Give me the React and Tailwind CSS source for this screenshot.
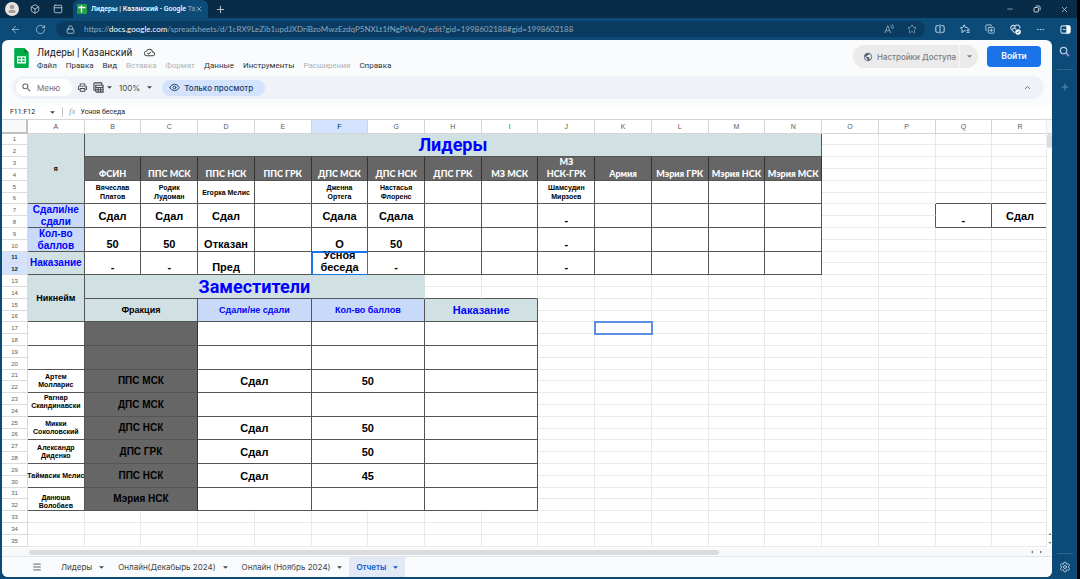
import React from "react";
import {
  ArrowLeft,
  Box,
  ChevronUp,
  CopyPlus,
  Ellipsis,
  Eye,
  Lock,
  Menu,
  Minus,
  PanelTop,
  Plus,
  RotateCw,
  Settings,
  Star,
  X,
} from "lucide-react";
import { MdOutlineCloudDone, MdOutlinePrint, MdPublic, MdSearch } from "react-icons/md";

const COLUMNS = "ABCDEFGHIJKLMNOPQR".split("");
const ROW_COUNT = 35;

const TEAL = "bg-[#d0e0e3]";
const BLUE = "bg-[#c9daf8]";
const GRAY = "bg-[#666666]";

const value = "font-bold text-[11px] leading-[12px] text-black";
const low = `${value} pb-px`;
const name = "font-bold text-[7px] leading-[9px] text-black";
const head = "font-['Lato'] font-black text-[9px] leading-[12px] text-white";
const small = "font-bold text-[9px] leading-[12px]";
const title = "font-['Roboto'] font-bold text-[18px] leading-[22px] text-[#0000ff]";

// key -> cell with optional spans; everything else is an empty cell
const cells = {};

const put = (key, text, opts = {}) => {
  cells[key] = { text, cs: 1, rs: 2, bg: "bg-white", cls: value, align: "items-center", ...opts };
};

put("A1", "я", { rs: 6, bg: TEAL, cls: name });
put("B1", "Лидеры", { cs: 13, bg: TEAL, cls: title });

const factions = [
  "ФСИН", "ППС МСК", "ППС НСК", "ППС ГРК", "ДПС МСК", "ДПС НСК", "ДПС ГРК",
  "МЗ МСК", "МЗ\nНСК-ГРК", "Армия", "Мэрия ГРК", "Мэрия НСК", "Мэрия МСК",
];
const leaders = ["Вячеслав\nПлатов", "Родик\nЛудоман", "Егорка Мелис", "", "Дженна\nОртега", "Настасья\nФлоренс", "", "", "Шамсудин\nМирзоев"];
const passed = ["Сдал", "Сдал", "Сдал", "", "Сдала", "Сдала", "", "", "-"];
const points = ["50", "50", "Отказан", "", "О", "50", "", "", "-"];
const penalty = ["-", "-", "Пред", "", "Усноя\nбеседа", "-", "", "", "-"];

factions.forEach((faction, i) => {
  const col = COLUMNS[i + 1];
  put(`${col}3`, faction, { bg: GRAY, cls: head, align: "items-end" });
  put(`${col}5`, leaders[i] || "", { cls: name });
  put(`${col}7`, passed[i] || "", passed[i] === "-" ? { cls: low, align: "items-end" } : {});
  put(`${col}9`, points[i] || "", { cls: low, align: "items-end" });
  put(`${col}11`, penalty[i] || "", { cls: low, align: "items-end" });
});

const side = "font-bold text-[10px] leading-[12px] text-[#0000ff]";
put("A7", "Сдали/не\nсдали", { bg: BLUE, cls: side });
put("A9", "Кол-во\nбаллов", { bg: BLUE, cls: side });
put("A11", "Наказание", { bg: TEAL, cls: side });
put("Q7", "-", { cls: low, align: "items-end" });
put("R7", "Сдал");

put("A13", "Никнейм", { rs: 4, bg: TEAL, cls: `${small} text-black` });
put("B13", "Заместители", { cs: 6, bg: TEAL, cls: title, noRight: true });
put("B15", "Фракция", { cs: 2, bg: TEAL, cls: `${small} text-black` });
put("D15", "Сдали/не сдали", { cs: 2, bg: BLUE, cls: `${small} text-[#0000ff]` });
put("F15", "Кол-во баллов", { cs: 2, bg: BLUE, cls: `${small} text-[#0000ff]` });
put("H15", "Наказание", { cs: 2, bg: TEAL, cls: "font-bold text-[11px] leading-[12px] text-[#0000ff]" });

const deputies = [
  { nick: "", faction: "", passed: "", points: "" },
  { nick: "", faction: "", passed: "", points: "" },
  { nick: "Артем\nМолларис", faction: "ППС МСК", passed: "Сдал", points: "50" },
  { nick: "Рагнар\nСкандинавски", faction: "ДПС МСК", passed: "", points: "", align: "items-start" },
  { nick: "Микки\nСоколовский", faction: "ДПС НСК", passed: "Сдал", points: "50" },
  { nick: "Александр\nДиденко", faction: "ДПС ГРК", passed: "Сдал", points: "50" },
  { nick: "Таймасик Мелис", faction: "ППС НСК", passed: "Сдал", points: "45" },
  { nick: "Данюша\nВолобаев", faction: "Мэрия НСК", passed: "", points: "", align: "items-end" },
];

deputies.forEach((d, i) => {
  const row = 17 + i * 2;
  put(`A${row}`, d.nick, { cls: "font-bold text-[7px] leading-[8px] text-black", align: d.align || "items-center" });
  put(`B${row}`, d.faction, { cs: 2, bg: GRAY, cls: "font-bold text-[10px] leading-[12px] text-black" });
  put(`D${row}`, d.passed, { cs: 2 });
  put(`F${row}`, d.points, { cs: 2 });
  put(`H${row}`, "", { cs: 2 });
});

const covered = new Set();
Object.entries(cells).forEach(([key, cell]) => {
  const c = COLUMNS.indexOf(key[0]);
  const r = Number(key.slice(1));
  for (let y = r; y < r + cell.rs; y++) {
    for (let x = c; x < c + cell.cs; x++) {
      if (y !== r || x !== c) covered.add(`${COLUMNS[x]}${y}`);
    }
  }
});

// empty cells that carry the border of a neighbouring block
const darkRight = new Set(["P7", "P8"]);
const darkBottom = new Set(["Q6", "R6", "H14", "I14"]);
// the frame of the selected cell F11
const blueRight = new Set(["E11", "F11"]);
const blueBottom = new Set(["F9", "F11"]);

const rightBorder = (id, cell) => {
  if (blueRight.has(id)) return "border-r-[#1a73e8]";
  if (!cell) return darkRight.has(id) ? "border-r-[#555555]" : "border-r-[#e8e9ea]";
  if (cell.noRight) return "border-r-[#d0e0e3]";
  return cell.bg === GRAY ? "border-r-[#333333]" : "border-r-[#555555]";
};

const bottomBorder = (id, cell) => {
  if (blueBottom.has(id)) return "border-b-[#1a73e8]";
  return cell || darkBottom.has(id) ? "border-b-[#555555]" : "border-b-[#e8e9ea]";
};

const outline = (id) => {
  if (id === "F11") return "outline -outline-offset-1 outline-[#1a73e8]";
  if (id === "K17") return "outline-2 -outline-offset-1 outline-[#5b8fe0]";
  return "";
};

const Caret = () => (
  <svg viewBox="0 0 8 4" className="w-[5px] h-[3px] shrink-0" fill="currentColor" aria-hidden="true">
    <path d="M0 0h8L4 4z" />
  </svg>
);

const SheetsLogo = ({ className }) => (
  <svg viewBox="0 0 16 22" className={className} aria-hidden="true">
    <path d="M1.5 0H11l5 5v15.5a1.5 1.5 0 0 1-1.5 1.5h-13A1.5 1.5 0 0 1 0 20.5v-19A1.5 1.5 0 0 1 1.5 0z" fill="#00ac47" />
    <path d="M11 0l5 5h-5z" fill="#00832d" />
    <path d="M3 9h10v8H3zM4.500 10.500v1.800h2.800v-1.800zm4.200 0v1.800h2.800v-1.800zm-4.200 3.200v1.800h2.800v-1.800zm4.200 0v1.800h2.800v-1.800z" fill="#fff" fillRule="evenodd" />
  </svg>
);

const TitleBar = () => (
  <div className="flex h-[18px] items-center bg-[#082b47] text-[#c3d0da]">
    <button aria-label="Профиль" className="ml-[5px] flex size-[14px] items-end justify-center rounded-full bg-[#e6e4e2]">
      <svg viewBox="0 0 14 14" className="size-[14px]" fill="#a39c98">
        <circle cx="7" cy="5" r="2.300" />
        <rect x="3.500" y="8" width="7" height="3" rx="1.500" />
      </svg>
    </button>
    <button aria-label="Рабочие области" className="ml-[11px]"><Box size={10} /></button>
    <button aria-label="Вкладки" className="ml-[13px]"><PanelTop size={10} /></button>
    <div className="ml-2.5 flex h-full w-[135px] items-center rounded-t-md bg-[#0c4a78] pl-1 pr-2">
      <svg viewBox="0 0 10 10" className="size-[10px] shrink-0">
        <rect width="10" height="10" rx="1" fill="#23a047" />
        <path d="M1.500 3.500h7M4.500 1.500v7" stroke="#fff" strokeWidth="1.300" />
      </svg>
      <span className="ml-1 flex-1 whitespace-nowrap text-[7px] font-medium text-white">
        Лидеры | Казанский - Google <span className="text-[#7fa0b8]">Та</span>
      </span>
      <button aria-label="Закрыть вкладку"><X size={8} /></button>
    </div>
    <button aria-label="Новая вкладка" className="ml-[7px]"><Plus size={11} /></button>
    <div className="ml-auto flex items-center gap-[19px] pr-2">
      <button aria-label="Свернуть"><Minus size={8} /></button>
      <button aria-label="Восстановить">
        <svg viewBox="0 0 8 8" className="size-2" fill="none" stroke="currentColor">
          <rect x="1" y="2.500" width="4.500" height="4.500" rx="1" />
          <path d="M2.800 1h3a1.300 1.300 0 0 1 1.300 1.300v3" />
        </svg>
      </button>
      <button aria-label="Закрыть"><X size={9} /></button>
    </div>
  </div>
);

const AddressBar = () => (
  <div className="flex h-[22px] items-center bg-[#0c4a78] pr-1.5 text-[#c3d6e4]">
    <button aria-label="Назад" className="ml-2.5"><ArrowLeft size={11} strokeWidth={1.5} /></button>
    <button aria-label="Обновить" className="ml-[14px]"><RotateCw size={11} strokeWidth={1.5} /></button>
    <div className="ml-[10px] flex h-4 flex-1 items-center rounded-full bg-[#0a3b61] pl-2.5 pr-2">
      <Lock size={9} />
      <span className="ml-[9px] whitespace-nowrap font-['Lato',sans-serif] text-[8px] text-[#8fa7ba]">
        https://<span className="text-white">docs.google.com</span>
        /spreadsheets/d/1cRX9LeZib1updJXDriBzoMwzEzdqP5NXLt1fNgPtVwQ/edit?gid=1998602188#gid=1998602188
      </span>
      <span className="ml-auto flex items-center gap-[13px] text-[#7f9bb0]">
        <button aria-label="Прочесть вслух">
          <svg viewBox="0 0 12 12" className="size-[10px]" fill="none" stroke="currentColor" strokeWidth="1.200">
            <path d="M1 11l3.500-9L8 11M2.200 8h4.600M8 1.500q1.300 1.500 0.500 3.500M10 0.500q2 2.500 0.500 5.500" />
          </svg>
        </button>
        <button aria-label="В избранное"><Star size={10} /></button>
      </span>
    </div>
    <div className="ml-2.5 flex items-center gap-[15px]">
      <button aria-label="Разделить экран">
        <svg viewBox="0 0 12 12" className="size-[10px]" fill="none" stroke="currentColor" strokeWidth="1.200">
          <path d="M4.500 2H2.500A1.500 1.500 0 0 0 1 3.500v5A1.500 1.500 0 0 0 2.500 10h2M7.500 2h2A1.500 1.500 0 0 1 11 3.500v5A1.500 1.500 0 0 1 9.500 10h-2M6 0.500v11" />
        </svg>
      </button>
      <button aria-label="Избранное">
        <svg viewBox="0 0 12 12" className="size-[10px]" fill="none" stroke="currentColor" strokeWidth="1.200" strokeLinejoin="round">
          <path d="M7 8.500L5 7.800 2.500 10.500 2.500 7 0.700 4.500 3.500 4 5 1 6.500 4 9 4.300M8.500 6h3M8 8h3.500M8 10h3.500" />
        </svg>
      </button>
      <button aria-label="Коллекции"><CopyPlus size={10} /></button>
      <button aria-label="Производительность">
        <svg viewBox="0 0 12 12" className="size-[11px]" fill="none" stroke="currentColor" strokeWidth="1.200">
          <path d="M5.500 10L1.500 6a2.600 2.600 0 0 1 4.200-3.500A2.600 2.600 0 0 1 10.500 5M2.500 5h1.500l1-1.500 1.300 2.500" />
          <circle cx="8.800" cy="8.600" r="3" fill="#fff" stroke="none" />
          <path d="M7.400 8.700l1 1 1.800-2" stroke="#0c4a78" strokeWidth="0.900" />
        </svg>
      </button>
      <button aria-label="Ещё"><Ellipsis size={9} /></button>
      <button aria-label="Боковая панель">
        <svg viewBox="0 0 12 12" className="size-[11px]" fill="none" stroke="currentColor" strokeWidth="1.200">
          <path d="M7.500 2H2.500A1.500 1.500 0 0 0 1 3.500v5A1.500 1.500 0 0 0 2.500 10h5M3 6h3" />
          <path d="M7.500 2h2A1.500 1.500 0 0 1 11 3.500v5A1.500 1.500 0 0 1 9.500 10h-2z" fill="#fff" stroke="#fff" />
        </svg>
      </button>
    </div>
  </div>
);

const menus = [
  ["Файл"], ["Правка"], ["Вид"], ["Вставка", true], ["Формат", true],
  ["Данные"], ["Инструменты"], ["Расширения", true], ["Справка"],
];

const DocHeader = () => (
  <header className="flex h-9 items-start pl-3 pr-[11px]">
    <SheetsLogo className="mt-2 h-5 w-[15px]" />
    <div className="ml-2 flex flex-col pt-1.5">
      <div className="flex items-center">
        <h1 className="text-[10px] leading-[13px] text-[#1f1f1f]">Лидеры | Казанский</h1>
        <MdOutlineCloudDone size={11} className="ml-3 text-[#444746]" />
      </div>
      <nav className="flex gap-[9px] text-[8px] leading-[13px]">
        {menus.map(([label, disabled]) => (
          <button key={label} disabled={disabled} className={disabled ? "text-[#b0b3b6]" : "text-[#333333]"}>
            {label}
          </button>
        ))}
      </nav>
    </div>
    <div className="mt-[5px] ml-auto flex h-[23px] items-center rounded-full bg-[#ebebeb] text-[#7b7d7f]">
      <button className="flex h-full items-center gap-1 border-r border-[#f6f6f6] pl-2.5 pr-[3px] font-['Inter',sans-serif] text-[8px] font-medium">
        <MdPublic size={10} className="text-[#5b6b7d]" />
        Настройки Доступа
      </button>
      <button aria-label="Параметры доступа" className="flex h-full w-[18px] items-center justify-center"><Caret /></button>
    </div>
    <a href="#login" className="mt-1.5 ml-[9px] flex h-[21px] w-[54px] items-center justify-center rounded-sm bg-[#1a73e8] text-[9px] font-medium text-white">
      Войти
    </a>
  </header>
);

const Toolbar = () => (
  <div className="mr-2 mb-1.5 ml-2.5 flex h-[23px] items-center rounded-full bg-[#eff3f9] text-[#444746]">
    <label className="ml-1 flex h-[17px] w-14 items-center rounded-full bg-white pl-[5px]">
      <MdSearch size={11} />
      <input aria-label="Меню" placeholder="Меню" className="ml-[5px] w-8 font-['Inter',sans-serif] text-[8px] outline-none placeholder:text-[#6f7275]" />
    </label>
    <button aria-label="Печать" className="ml-[5px]"><MdOutlinePrint size={11} /></button>
    <button aria-label="Фильтры" className="ml-[5px] flex items-center gap-[3px]">
      <svg viewBox="0 0 12 12" className="size-[11px]" fill="none" stroke="currentColor" strokeWidth="1.200">
        <path d="M1 9V2a1 1 0 0 1 1-1h7.500v2M1 9h1.500M3 3.500h8V11H4a1 1 0 0 1-1-1zM3 6h8M3 8.500h8M5.700 6v5M8.400 6v5" />
      </svg>
      <Caret />
    </button>
    <button className="ml-[7px] flex items-center gap-[7px] font-['Inter',sans-serif] text-[8px]">100%<Caret /></button>
    <button className="ml-2.5 flex h-4 items-center gap-1 rounded-full bg-[#d3e3fd] pl-[7px] pr-3 font-['Inter',sans-serif] text-[8px] font-medium text-[#1f3a68]">
      <Eye size={11} />
      Только просмотр
    </button>
    <button aria-label="Скрыть меню" className="ml-auto mr-3"><ChevronUp size={9} /></button>
  </div>
);

const FormulaBar = () => (
  <div className="flex h-[14px] items-center bg-white text-[7px] text-[#222222]">
    <input aria-label="Поле имени" defaultValue="F11:F12" className="ml-2 w-10 outline-none" />
    <button aria-label="Диапазоны" className="text-[#444746]"><Caret /></button>
    <span className="ml-[7px] h-2.5 w-px bg-[#c7c7c7]" />
    <label htmlFor="formula" className="ml-1.5 font-['Liberation_Serif',serif] text-[9px] italic text-[#9aa0a6]">fx</label>
    <input id="formula" defaultValue="Усноя беседа" className="ml-[5px] flex-1 outline-none" />
  </div>
);

const Cell = ({ id }) => {
  if (covered.has(id)) return null;
  const cell = cells[id];
  const borders = `border-r border-b ${rightBorder(id, cell)} ${bottomBorder(id, cell)} ${outline(id)}`;
  if (!cell) return <td className={`p-0 ${borders}`} />;
  return (
    <td colSpan={cell.cs} rowSpan={cell.rs} className={`p-0 ${borders} ${cell.bg}`}>
      {cell.text && (
        <div className={`flex h-[22px] justify-center whitespace-pre text-center ${cell.align} ${cell.cls}`}>
          <span>{cell.text}</span>
        </div>
      )}
    </td>
  );
};

const Sheet = () => (
  <div className="flex min-h-0 flex-1 bg-white">
    <div className="min-w-0 flex-1 overflow-hidden">
      <table className="w-[calc(100%+3px)] table-fixed border-separate border-spacing-0 font-['Liberation_Sans',Arial,sans-serif]">
        <thead>
          <tr className="h-[15px] text-[7px] leading-[9px] text-[#575a5c]">
            <th aria-label="Все ячейки" className="w-[26px] border-t border-r-2 border-b-2 border-[#c0c0c0] border-t-[#d5d5d5] bg-[#f8f9fa] p-0" />
            {COLUMNS.map((col) => (
              <th key={col} className={`border-y border-r border-[#d5d5d5] p-0 font-normal ${col === "F" ? "bg-[#d3e3fd] text-[#041e49]" : ""}`}>
                {col}
              </th>
            ))}
          </tr>
        </thead>
        <tbody>
          {Array.from({ length: ROW_COUNT }, (_, i) => i + 1).map((row) => (
            <tr key={row} className={row % 5 === 1 ? "h-[11px]" : "h-3"}>
              <th
                className={`border-r border-b border-[#d9dbdd] p-0 text-[6px] leading-[8px] ${
                  row === 11 || row === 12 ? "bg-[#d3e3fd] font-bold text-[#041e49]" : "font-normal text-[#575a5c]"
                }`}
              >
                {row}
              </th>
              {COLUMNS.map((col) => (
                <Cell key={col} id={`${col}${row}`} />
              ))}
            </tr>
          ))}
        </tbody>
      </table>
    </div>
    <div className="flex w-1.5 shrink-0 flex-col items-center border-l border-[#ececec] text-[#777777]">
      <div className="h-[15px] w-full border-y border-[#d5d5d5] bg-[#f8f9fa]" />
      <div className="h-[14px] w-full rounded-full bg-[#dadce0]" />
      <svg viewBox="0 0 4 16" className="mt-auto mb-0.5 h-4 w-1" fill="currentColor">
        <path d="M0.500 5L2 3l1.500 2zM0.500 12L2 14l1.500-2z" />
      </svg>
    </div>
  </div>
);

const HorizontalScroll = () => (
  <div className="flex h-[9px] items-center border-b border-[#e3e5e8] bg-[#f8f9fa] pl-[27px] pr-[7px] text-[#777777]">
    <div className="flex-1">
      <div className="h-[5px] w-[69%] rounded-full bg-[#dadce0]" />
    </div>
    <svg viewBox="0 0 16 4" className="h-1 w-4" fill="currentColor">
      <path d="M4 0.500L2 2l2 1.500zM11 0.500L13 2l-2 1.500z" />
    </svg>
  </div>
);

const sheets = ["Лидеры", "Онлайн(Декабырь 2024)", "Онлайн (Ноябрь 2024)", "Отчеты"];

const SheetTabs = () => (
  <div className="flex h-5 items-center bg-[#f9fbfd] pl-[30px] font-['Inter',sans-serif] text-[8px] text-[#444746]">
    <button aria-label="Все листы" className="mr-3"><Menu size={10} /></button>
    {sheets.map((sheet) => (
      <button
        key={sheet}
        className={`flex h-full items-center gap-[7px] px-[7px] ${
          sheet === "Отчеты" ? "bg-[#e1e9f7] font-semibold text-[#0b57d0]" : ""
        }`}
      >
        {sheet}
        <Caret />
      </button>
    ))}
  </div>
);

const EdgeSidebar = () => (
  <aside className="flex w-[25px] shrink-0 flex-col items-center bg-[#0c4a78] text-[#b5cbdb]">
    <button aria-label="Поиск" className="mt-1.5">
      <svg viewBox="0 0 12 12" className="size-[11px]" fill="none" strokeWidth="1.400" strokeLinecap="round">
        <circle cx="5" cy="5" r="3.500" stroke="currentColor" />
        <path d="M8 8l2.500 2.500" stroke="#b78be8" strokeWidth="1.800" />
      </svg>
    </button>
    <span className="mt-3 h-px w-4 bg-[#2c6590]" />
    <button aria-label="Настроить" className="mt-3 text-[#6f9bbb]"><Plus size={10} /></button>
    <span className="mt-auto h-px w-4 bg-[#2c6590]" />
    <button aria-label="Параметры" className="mt-[7px] mb-1.5"><Settings size={12} /></button>
  </aside>
);

const App = () => {
  return (
    <div className="flex h-screen bg-black pr-[3px] font-['Roboto',sans-serif]">
      <div className="flex min-w-0 flex-1 flex-col bg-[#0c4a78]">
        <TitleBar />
        <AddressBar />
        <div className="flex min-h-0 flex-1">
          <main className="mb-0.5 ml-0.5 flex min-w-0 flex-1 flex-col overflow-hidden rounded-md bg-[#f9fbfd]">
            <DocHeader />
            <Toolbar />
            <FormulaBar />
            <Sheet />
            <HorizontalScroll />
            <SheetTabs />
          </main>
          <EdgeSidebar />
        </div>
      </div>
    </div>
  );
};

export default App;
